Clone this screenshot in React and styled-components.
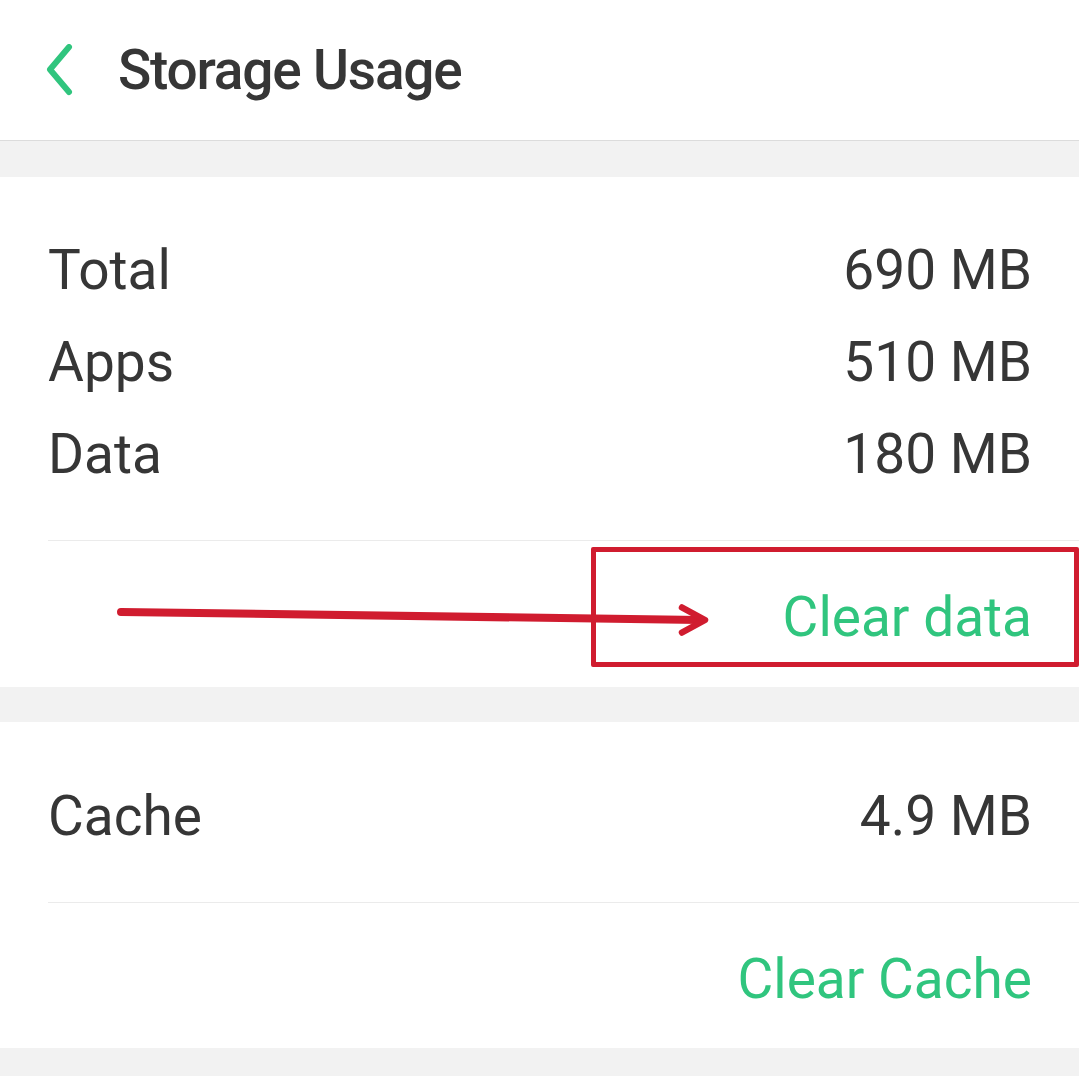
import React from "react";
import styled, { createGlobalStyle } from "styled-components";

const GlobalStyle = createGlobalStyle`
  body {
    margin: 0;
    background: #f2f2f2;
    font-family: Roboto, "Noto Sans", "Liberation Sans", sans-serif;
  }
`;

const Page = styled.div`
  position: relative;
  width: 1079px;
  height: 1076px;
  background: #f2f2f2;
  overflow: hidden;
  color: #363636;
`;

const Header = styled.div`
  height: 140px;
  display: flex;
  align-items: center;
  background: #fff;
  border-bottom: 1px solid #dcdcdc;
  padding-left: 44px;
`;

const BackButton = styled.div`
  width: 30px;
  height: 52px;
  display: flex;
  align-items: center;
  margin-right: 44px;
`;

const Title = styled.h1`
  margin: 0;
  font-size: 55px;
  font-weight: 500;
  color: #363636;
  letter-spacing: -1.2px;
`;

const Card = styled.div`
  background: #fff;
  margin-top: ${(p) => p.$gap}px;
  padding-top: ${(p) => p.$top}px;
`;

const Row = styled.div`
  display: flex;
  justify-content: space-between;
  align-items: center;
  height: 92px;
  padding: 0 47px 0 48px;
  font-size: 55px;
`;

const Divider = styled.div`
  height: 1px;
  background: #ebebeb;
  margin: 40px 0 0 48px;
`;

const ActionRow = styled.div`
  display: flex;
  justify-content: flex-end;
  align-items: center;
  box-sizing: border-box;
  height: ${(p) => p.$h}px;
  padding: 6px 47px 0 0;
`;

const Action = styled.span`
  font-size: 55px;
  color: #30c57e;
`;

const Highlight = styled.div`
  position: absolute;
  left: 591px;
  top: 547px;
  width: 488px;
  height: 120px;
  box-sizing: border-box;
  border: 5px solid #d01c2f;
  border-radius: 2px;
`;

const Arrow = styled.svg`
  position: absolute;
  left: 0;
  top: 0;
  pointer-events: none;
`;

const Chevron = () => (
  <svg width="30" height="52" viewBox="0 0 30 52">
    <path
      d="M25 3 L6 25.5 L25 48"
      fill="none"
      stroke="#30c57e"
      strokeWidth="6"
      strokeLinecap="round"
      strokeLinejoin="round"
    />
  </svg>
);

const usage = [
  { label: "Total", value: "690 MB" },
  { label: "Apps", value: "510 MB" },
  { label: "Data", value: "180 MB" },
];

export default function App() {
  return (
    <Page>
      <GlobalStyle />
      <Header>
        <BackButton>
          <Chevron />
        </BackButton>
        <Title>Storage Usage</Title>
      </Header>

      <Card $gap={36} $top={47}>
        {usage.map((u) => (
          <Row key={u.label}>
            <span>{u.label}</span>
            <span>{u.value}</span>
          </Row>
        ))}
        <Divider />
        <ActionRow $h={146}>
          <Action>Clear data</Action>
        </ActionRow>
      </Card>

      <Card $gap={35} $top={48}>
        <Row>
          <span>Cache</span>
          <span>4.9 MB</span>
        </Row>
        <Divider />
        <ActionRow $h={145}>
          <Action>Clear Cache</Action>
        </ActionRow>
      </Card>

      <Highlight />
      <Arrow width="1079" height="1076">
        <path
          d="M121 612 L700 620"
          stroke="#d01c2f"
          strokeWidth="8"
          strokeLinecap="round"
          fill="none"
        />
        <path
          d="M682 607.5 L705 620 L682 632.5"
          stroke="#d01c2f"
          strokeWidth="6.5"
          strokeLinecap="round"
          strokeLinejoin="round"
          fill="none"
        />
      </Arrow>
    </Page>
  );
}
